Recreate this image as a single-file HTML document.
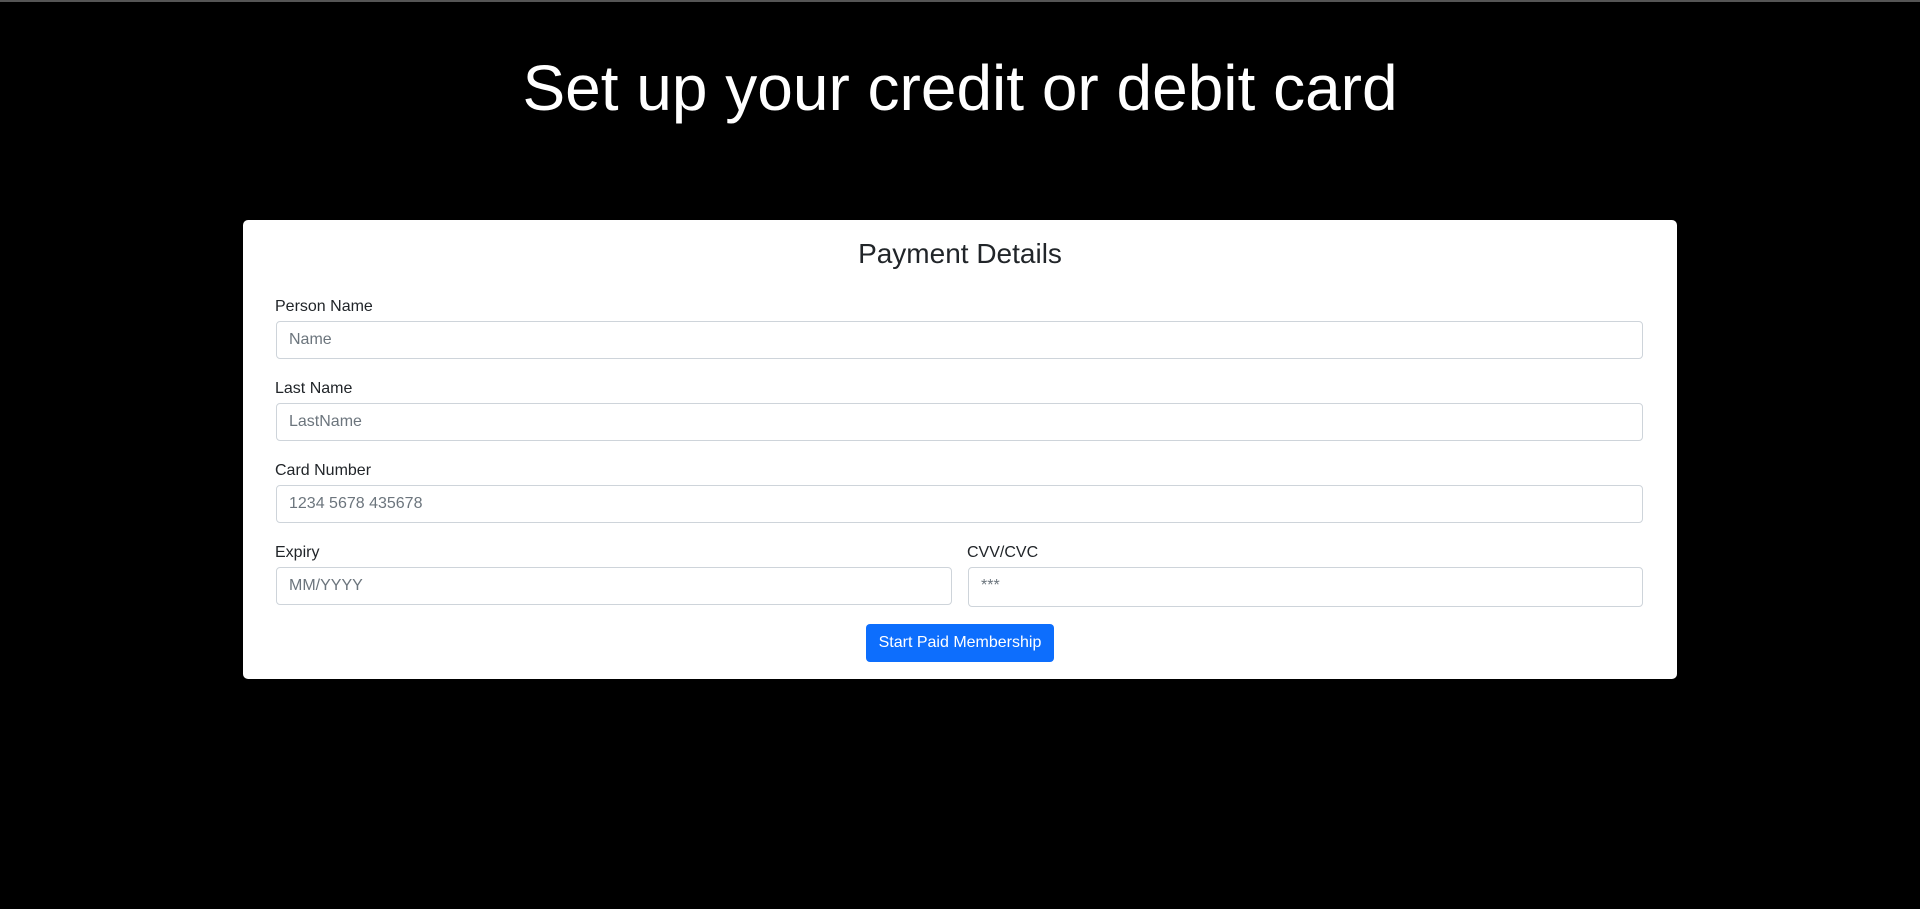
<!DOCTYPE html>
<html><head><meta charset="utf-8"><style>
*{box-sizing:border-box;margin:0;padding:0}
body{width:1920px;height:909px;background:#000;font-family:"Liberation Sans",Arial,sans-serif;position:relative;overflow:hidden;border-top:2px solid #555}
h1{position:absolute;left:0;width:1920px;top:46px;text-align:center;color:#fff;font-weight:400;font-size:64px;line-height:80px}
.card{position:absolute;left:243px;top:218px;width:1434px;height:459px;background:#fff;border-radius:5px}
.t{position:absolute;left:0;width:100%;top:15px;text-align:center;font-size:28px;line-height:38px;color:#212529}
.l{position:absolute;font-size:16px;line-height:24px;color:#212529}
.i{position:absolute;height:38px;border:1px solid #ced4da;border-radius:4px;font-size:16px;line-height:36px;padding-left:12px;color:#6c757d}
.b{position:absolute;left:623px;top:404px;width:188px;height:38px;background:#0d6efd;border-radius:4px;color:#fff;font-size:16px;line-height:38px;text-align:center}
</style></head><body>
<h1>Set up your credit or debit card</h1>
<div class="card">
<div class="t">Payment Details</div>
<div class="l" style="left:32px;top:75px">Person Name</div>
<div class="i" style="left:33px;top:101px;width:1367px">Name</div>
<div class="l" style="left:32px;top:157px">Last Name</div>
<div class="i" style="left:33px;top:183px;width:1367px">LastName</div>
<div class="l" style="left:32px;top:239px">Card Number</div>
<div class="i" style="left:33px;top:265px;width:1367px">1234 5678 435678</div>
<div class="l" style="left:32px;top:321px">Expiry</div>
<div class="i" style="left:33px;top:347px;width:676px">MM/YYYY</div>
<div class="l" style="left:724px;top:321px">CVV/CVC</div>
<div class="i" style="left:725px;top:347px;width:675px;height:40px">***</div>
<div class="b">Start Paid Membership</div>
</div>
</body></html>
